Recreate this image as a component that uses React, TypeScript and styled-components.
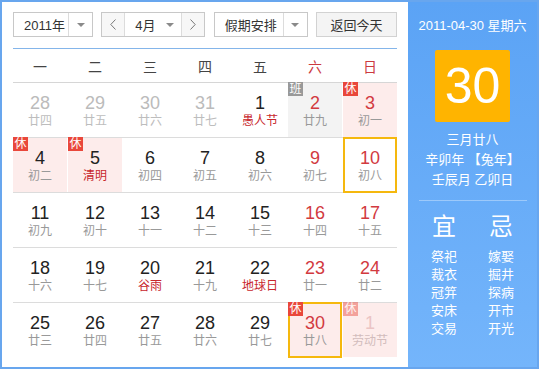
import React from "react";
import styled, { createGlobalStyle, css } from "styled-components";

const GlobalStyle = createGlobalStyle`
  html, body { margin: 0; padding: 0; background: #fff; }
  body { font-family: "Liberation Sans", "Noto Sans CJK SC", sans-serif; }
`;

type Kind = "prev" | "normal" | "weekend" | "next";
type Badge = "rest" | "work";

interface Day {
  num: number;
  lunar: string;
  kind?: Kind;
  festival?: boolean;
  badge?: Badge;
  marked?: boolean;
}

const weeks: Day[][] = [
  [
    { num: 28, lunar: "廿四", kind: "prev" },
    { num: 29, lunar: "廿五", kind: "prev" },
    { num: 30, lunar: "廿六", kind: "prev" },
    { num: 31, lunar: "廿七", kind: "prev" },
    { num: 1, lunar: "愚人节", festival: true },
    { num: 2, lunar: "廿九", kind: "weekend", badge: "work" },
    { num: 3, lunar: "初一", kind: "weekend", badge: "rest" },
  ],
  [
    { num: 4, lunar: "初二", badge: "rest" },
    { num: 5, lunar: "清明", badge: "rest", festival: true },
    { num: 6, lunar: "初四" },
    { num: 7, lunar: "初五" },
    { num: 8, lunar: "初六" },
    { num: 9, lunar: "初七", kind: "weekend" },
    { num: 10, lunar: "初八", kind: "weekend", marked: true },
  ],
  [
    { num: 11, lunar: "初九" },
    { num: 12, lunar: "初十" },
    { num: 13, lunar: "十一" },
    { num: 14, lunar: "十二" },
    { num: 15, lunar: "十三" },
    { num: 16, lunar: "十四", kind: "weekend" },
    { num: 17, lunar: "十五", kind: "weekend" },
  ],
  [
    { num: 18, lunar: "十六" },
    { num: 19, lunar: "十七" },
    { num: 20, lunar: "谷雨", festival: true },
    { num: 21, lunar: "十九" },
    { num: 22, lunar: "地球日", festival: true },
    { num: 23, lunar: "廿一", kind: "weekend" },
    { num: 24, lunar: "廿二", kind: "weekend" },
  ],
  [
    { num: 25, lunar: "廿三" },
    { num: 26, lunar: "廿四" },
    { num: 27, lunar: "廿五" },
    { num: 28, lunar: "廿六" },
    { num: 29, lunar: "廿七" },
    { num: 30, lunar: "廿八", kind: "weekend", badge: "rest", marked: true },
    { num: 1, lunar: "劳动节", kind: "next", badge: "rest", festival: true },
  ],
];

const weekdays = ["一", "二", "三", "四", "五", "六", "日"];
const good = ["祭祀", "裁衣", "冠笄", "安床", "交易"];
const bad = ["嫁娶", "掘井", "探病", "开市", "开光"];

const Frame = styled.div`
  width: 539px;
  height: 369px;
  box-sizing: border-box;
  border: 2px solid #68a6ee;
  display: flex;
  background: #fff;
`;

const CalendarPanel = styled.div`
  width: 406px;
  box-sizing: border-box;
  padding: 10px 11px 0;
`;

const Toolbar = styled.div`
  display: flex;
  justify-content: space-between;
  height: 25px;
  font-size: 13px;
  color: #333;
`;

const Select = styled.div<{ $width: number }>`
  width: ${(p) => p.$width}px;
  box-sizing: border-box;
  border: 1px solid #c8c8c8;
  background: #fff;
  display: flex;
  align-items: center;
`;

const SelectLabel = styled.span`
  flex: 1;
  padding-left: 10px;
  white-space: nowrap;
`;

const SelectArrow = styled.span<{ $divided?: boolean }>`
  width: 23px;
  align-self: stretch;
  display: flex;
  align-items: center;
  justify-content: center;
  ${(p) =>
    p.$divided &&
    css`
      border-left: 1px solid #dcdcdc;
    `}

  &::after {
    content: "";
    border-left: 4px solid transparent;
    border-right: 4px solid transparent;
    border-top: 4px solid #8a8a8a;
  }
`;

const NavButton = styled.span<{ $side: "left" | "right" }>`
  width: 22px;
  align-self: stretch;
  display: flex;
  align-items: center;
  justify-content: center;
  background: #f7f7f7;
  ${(p) =>
    p.$side === "left"
      ? css`
          border-right: 1px solid #dcdcdc;
        `
      : css`
          border-left: 1px solid #dcdcdc;
        `}
`;

const TodayButton = styled.button`
  width: 81px;
  height: 25px;
  box-sizing: border-box;
  border: 1px solid #d2d2d2;
  background: #f4f4f4;
  font: inherit;
  font-size: 13px;
  color: #333;
  padding: 0;
`;

const ToolbarRule = styled.div`
  height: 1px;
  margin-top: 11px;
  background: #84b5ea;
`;

const Grid7 = styled.div`
  display: grid;
  grid-template-columns: repeat(7, 54px);
  column-gap: 1px;
`;

const WeekHeader = styled(Grid7)`
  height: 33px;
  align-items: center;
  border-bottom: 1px solid #d6d6d6;
`;

const WeekdayName = styled.span<{ $weekend: boolean }>`
  text-align: center;
  font-size: 14px;
  color: ${(p) => (p.$weekend ? "#cc3a3f" : "#444")};
`;

const WeekRow = styled(Grid7)`
  height: 54px;
  border-bottom: 1px solid #dcdcdc;

  &:last-child {
    border-bottom: none;
  }
`;

const Cell = styled.div<{ $badge?: Badge }>`
  position: relative;
  display: flex;
  flex-direction: column;
  align-items: center;
  padding-top: 10px;
  box-sizing: border-box;
  background: ${(p) =>
    p.$badge === "rest" ? "#fdeceb" : p.$badge === "work" ? "#f3f3f3" : "#fff"};
`;

const numColor: Record<Kind, string> = {
  prev: "#bbbbbb",
  normal: "#222222",
  weekend: "#d23a3f",
  next: "#ebc4c4",
};

const DayNum = styled.span<{ $kind: Kind }>`
  font-size: 18px;
  line-height: 20px;
  color: ${(p) => numColor[p.$kind]};
`;

const Lunar = styled.span<{ $kind: Kind; $festival?: boolean }>`
  font-size: 12px;
  line-height: 16px;
  white-space: nowrap;
  color: ${(p) =>
    p.$kind === "next"
      ? "#d2bcbc"
      : p.$kind === "prev"
      ? "#bdbdbd"
      : p.$festival
      ? "#c8262c"
      : "#999999"};
`;

const CornerBadge = styled.span<{ $type: Badge; $faded?: boolean }>`
  position: absolute;
  top: -1px;
  left: 0;
  width: 15px;
  height: 14px;
  z-index: 2;
  font-size: 12px;
  line-height: 14px;
  text-align: center;
  color: #fff;
  background: ${(p) => (p.$type === "rest" ? "#e9473b" : "#999")};
  opacity: ${(p) => (p.$faded ? 0.45 : 1)};
`;

const Marker = styled.span`
  position: absolute;
  top: -1px;
  bottom: -1px;
  left: 0;
  right: 0;
  border: 2px solid #f5b80e;
  z-index: 1;
  pointer-events: none;
`;

const InfoPanel = styled.div`
  flex: 1;
  background: linear-gradient(#5ba3f5, #74b5fb);
  color: #fff;
  display: flex;
  flex-direction: column;
  align-items: center;
  padding-top: 16px;
`;

const DateLine = styled.div`
  font-size: 13px;
  line-height: 16px;
  white-space: nowrap;
`;

const DayBox = styled.div`
  margin-top: 16px;
  width: 75px;
  height: 72px;
  border-radius: 2px;
  background: #ffb400;
  font-size: 50px;
  line-height: 72px;
  text-align: center;
`;

const LunarInfo = styled.div`
  margin-top: 8px;
  font-size: 13px;
  line-height: 20px;
  text-align: center;
  white-space: nowrap;
`;

const Divider = styled.div`
  margin-top: 10px;
  width: 108px;
  height: 1px;
  background: rgba(255, 255, 255, 0.35);
`;

const Advice = styled.div`
  margin-top: 11px;
  display: grid;
  grid-template-columns: repeat(2, 57px);
`;

const AdviceColumn = styled.div`
  display: flex;
  flex-direction: column;
  align-items: center;
`;

const AdviceTitle = styled.div`
  font-size: 24px;
  line-height: 30px;
  margin-bottom: 6px;
`;

const AdviceItem = styled.div`
  font-size: 13px;
  line-height: 18px;
`;

const Chevron: React.FC<{ dir: "left" | "right" }> = ({ dir }) => (
  <svg width="6" height="11" viewBox="0 0 6 11">
    <polyline
      points={dir === "left" ? "5.5,0.5 0.8,5.5 5.5,10.5" : "0.5,0.5 5.2,5.5 0.5,10.5"}
      fill="none"
      stroke="#777"
      strokeWidth="1"
    />
  </svg>
);

export default function App() {
  return (
    <>
      <GlobalStyle />
      <Frame>
        <CalendarPanel>
          <Toolbar>
            <Select $width={80}>
              <SelectLabel>2011年</SelectLabel>
              <SelectArrow $divided />
            </Select>
            <Select $width={104}>
              <NavButton $side="left">
                <Chevron dir="left" />
              </NavButton>
              <SelectLabel>4月</SelectLabel>
              <SelectArrow />
              <NavButton $side="right">
                <Chevron dir="right" />
              </NavButton>
            </Select>
            <Select $width={94}>
              <SelectLabel>假期安排</SelectLabel>
              <SelectArrow $divided />
            </Select>
            <TodayButton>返回今天</TodayButton>
          </Toolbar>
          <ToolbarRule />

          <WeekHeader>
            {weekdays.map((w, i) => (
              <WeekdayName key={w} $weekend={i >= 5}>
                {w}
              </WeekdayName>
            ))}
          </WeekHeader>

          {weeks.map((week, wi) => (
            <WeekRow key={wi}>
              {week.map((d, di) => {
                const kind = d.kind ?? "normal";
                return (
                  <Cell key={di} $badge={d.badge}>
                    {d.badge && (
                      <CornerBadge $type={d.badge} $faded={kind === "next"}>
                        {d.badge === "rest" ? "休" : "班"}
                      </CornerBadge>
                    )}
                    {d.marked && <Marker />}
                    <DayNum $kind={kind}>{d.num}</DayNum>
                    <Lunar $kind={kind} $festival={d.festival}>
                      {d.lunar}
                    </Lunar>
                  </Cell>
                );
              })}
            </WeekRow>
          ))}
        </CalendarPanel>

        <InfoPanel>
          <DateLine>2011-04-30 星期六</DateLine>
          <DayBox>30</DayBox>
          <LunarInfo>
            三月廿八
            <br />
            辛卯年 【兔年】
            <br />
            壬辰月 乙卯日
          </LunarInfo>
          <Divider />
          <Advice>
            <AdviceColumn>
              <AdviceTitle>宜</AdviceTitle>
              {good.map((g) => (
                <AdviceItem key={g}>{g}</AdviceItem>
              ))}
            </AdviceColumn>
            <AdviceColumn>
              <AdviceTitle>忌</AdviceTitle>
              {bad.map((b) => (
                <AdviceItem key={b}>{b}</AdviceItem>
              ))}
            </AdviceColumn>
          </Advice>
        </InfoPanel>
      </Frame>
    </>
  );
}
